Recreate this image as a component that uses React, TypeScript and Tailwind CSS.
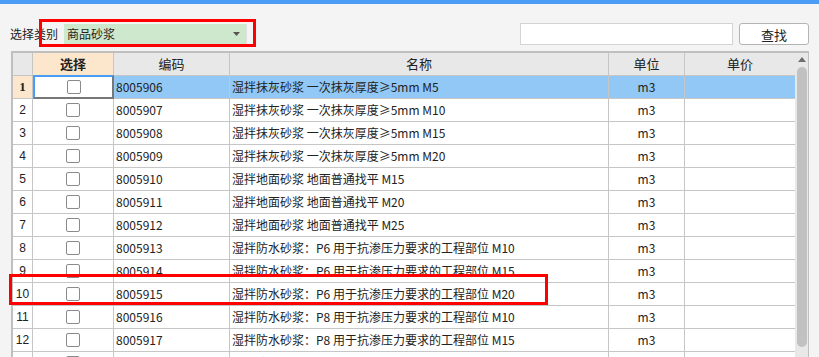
import React from "react";

const rows: [string, string][] = [
  ["8005906", "湿拌抹灰砂浆 一次抹灰厚度≥5mm M5"],
  ["8005907", "湿拌抹灰砂浆 一次抹灰厚度≥5mm M10"],
  ["8005908", "湿拌抹灰砂浆 一次抹灰厚度≥5mm M15"],
  ["8005909", "湿拌抹灰砂浆 一次抹灰厚度≥5mm M20"],
  ["8005910", "湿拌地面砂浆 地面普通找平 M15"],
  ["8005911", "湿拌地面砂浆 地面普通找平 M20"],
  ["8005912", "湿拌地面砂浆 地面普通找平 M25"],
  ["8005913", "湿拌防水砂浆：P6 用于抗渗压力要求的工程部位 M10"],
  ["8005914", "湿拌防水砂浆：P6 用于抗渗压力要求的工程部位 M15"],
  ["8005915", "湿拌防水砂浆：P6 用于抗渗压力要求的工程部位 M20"],
  ["8005916", "湿拌防水砂浆：P8 用于抗渗压力要求的工程部位 M10"],
  ["8005917", "湿拌防水砂浆：P8 用于抗渗压力要求的工程部位 M15"],
  ["8005918", "湿拌防水砂浆：P8 用于抗渗压力要求的工程部位 M20"],
  ["8005919", "湿拌防水砂浆：P10 用于抗渗压力要求的工程部位 M10"],
];

const font = { fontFamily: '"Noto Sans CJK SC", "Liberation Sans", sans-serif' };

function Checkbox() {
  return <div className="w-[14px] h-[14px] border border-[#8a8a8a] rounded-[2px] bg-white" />;
}

export default function App() {
  return (
    <div className="relative w-[819px] h-[357px] overflow-hidden bg-[#f4f4f4] text-[#222]" style={font}>
      <div className="h-[4px] bg-[#4a9cf5]" />
      <div className="flex items-center h-[22px] mt-[19px] pl-[10px] pr-[10px] text-[12px]">
        <div className="w-[54px] leading-none">选择类别</div>
        <div className="w-[183px] h-[21px] bg-[#cde8cd] border-r border-[#e0e0e0] flex items-center pl-[3px] pr-[6px]">
          <span className="flex-1 leading-none">商品砂浆</span>
          <svg width="7" height="4" viewBox="0 0 7 4"><path d="M0 0h7L3.5 4z" fill="#555" /></svg>
        </div>
        <div className="flex-1" />
        <div className="w-[213px] h-[22px] bg-white border border-[#d4d4d4]" />
        <div className="ml-[6px] w-[70px] h-[22px] bg-white border border-[#b4b4b4] rounded-[3px] flex items-center justify-center leading-none text-[13px]">查找</div>
      </div>

      {/* table */}
      <div className="ml-[11px] mt-[6px] flex w-[798px] border-t-2 border-l-2 border-r border-[#bfbfbf]">
        <div className="w-[782px] flex flex-col">
          {/* header */}
          <div className="flex h-[23px] text-[13px] bg-[#e8e8e8]">
            <div className="w-[20px] border-r border-b border-[#c6c6c6]" />
            <div className="w-[81px] border-r border-b border-[#c6c6c6] bg-[#fde7cc] flex items-center justify-center font-bold">选择</div>
            <div className="w-[116px] border-r border-b border-[#c6c6c6] flex items-center justify-center">编码</div>
            <div className="w-[379px] border-r border-b border-[#c6c6c6] flex items-center justify-center">名称</div>
            <div className="w-[76px] border-r border-b border-[#c6c6c6] flex items-center justify-center">单位</div>
            <div className="w-[110px] border-b border-[#c6c6c6] flex items-center justify-center">单价</div>
          </div>
          {rows.map(([code, name], i) => {
            const sel = i === 0;
            const rowBg = sel ? "bg-[#91c8f6]" : "bg-white";
            return (
              <div key={code} className="flex h-[23px] text-[12px] shrink-0">
                <div
                  className={
                    "w-[20px] border-r border-b border-[#c6c6c6] flex items-center justify-center " +
                    (sel ? "bg-[#fde7cc] font-bold text-[13px]" : "bg-white")
                  }
                  style={sel ? { fontFamily: '"Liberation Serif", serif' } : { fontFamily: '"Liberation Sans", sans-serif' }}
                >
                  {i + 1}
                </div>
                {sel ? (
                  <div className="w-[81px] h-[24px] -ml-px border-l-2 border-t-2 border-l-[#4a9cf5] border-t-[#4a9cf5] border-r-2 border-b-2 border-r-[#777] border-b-[#777] bg-white flex items-center justify-center -mt-px ml-0 relative z-10">
                    <Checkbox />
                  </div>
                ) : (
                  <div className="w-[81px] border-r border-b border-[#c6c6c6] bg-white flex items-center justify-center">
                    <Checkbox />
                  </div>
                )}
                <div className={"w-[116px] border-r border-b border-[#c6c6c6] flex items-center pl-[2px] " + rowBg}>{code}</div>
                <div className={"w-[379px] border-r border-b border-[#c6c6c6] flex items-center pl-[2px] whitespace-nowrap " + rowBg}>{name}</div>
                <div className={"w-[76px] border-r border-b border-[#c6c6c6] flex items-center justify-center " + rowBg}>m3</div>
                <div className={"w-[110px] border-b border-[#c6c6c6] " + rowBg} />
              </div>
            );
          })}
        </div>
        {/* scrollbar */}
        <div className="w-[13px] bg-[#e8e8e8] flex flex-col items-center pt-[4px]">
          <svg width="8" height="5" viewBox="0 0 8 5"><path d="M0 5L4 0l4 5z" fill="#6e6e6e" /></svg>
          <div className="mt-[5px] w-[10px] h-[280px] rounded-[5px] bg-[#c1c1c1]" />
        </div>
      </div>

      {/* annotation boxes */}
      <div className="absolute left-[39px] top-[19px] w-[217px] h-[28px] border-[3px] border-[#f00]" />
      <div className="absolute left-[9px] top-[274px] w-[539px] h-[31px] border-[3px] border-[#f00]" />
    </div>
  );
}
